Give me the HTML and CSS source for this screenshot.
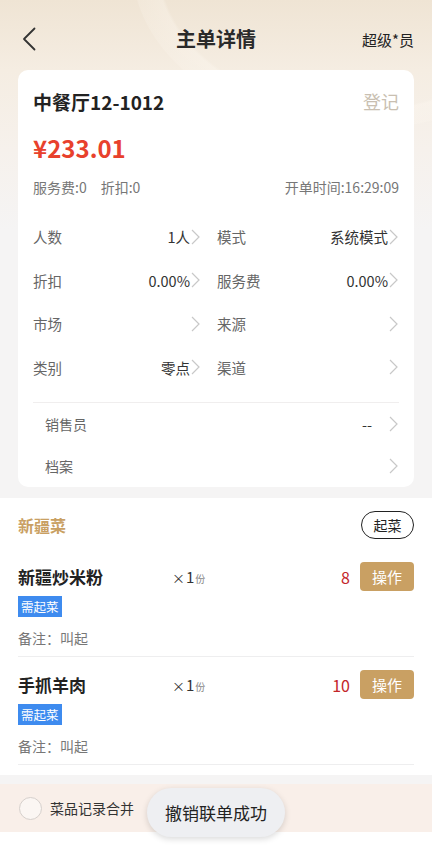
FILE: index.html
```html
<!DOCTYPE html>
<html lang="zh">
<head>
<meta charset="utf-8">
<link rel="stylesheet" href="styles.css">
</head>
<body>
<div class="page">
  <div class="top">
    <div class="deco"></div>
    <header class="header">
      <svg class="back" width="14" height="24" viewBox="0 0 14 24"><polyline points="12.5,1.5 2,12 12.5,22.5" fill="none" stroke="#333" stroke-width="1.8" stroke-linecap="round" stroke-linejoin="round"/></svg>
      <h1 class="title">主单详情</h1>
      <span class="user">超级*员</span>
    </header>
    <section class="card">
      <div class="card-head">
        <span class="table-name">中餐厅12-1012</span>
        <span class="register">登记</span>
      </div>
      <div class="price">¥233.01</div>
      <div class="meta">
        <span>服务费:0<span class="sp"></span>折扣:0</span>
        <span>开单时间:16:29:09</span>
      </div>
      <div class="grid">
        <div class="cell"><span class="lab">人数</span><span class="val">1人</span><svg class="chev" viewBox="0 0 9 16"><polyline points="1,1 8,8 1,15"/></svg></div>
        <div class="cell"><span class="lab">模式</span><span class="val">系统模式</span><svg class="chev" viewBox="0 0 9 16"><polyline points="1,1 8,8 1,15"/></svg></div>
        <div class="cell"><span class="lab">折扣</span><span class="val">0.00%</span><svg class="chev" viewBox="0 0 9 16"><polyline points="1,1 8,8 1,15"/></svg></div>
        <div class="cell"><span class="lab">服务费</span><span class="val">0.00%</span><svg class="chev" viewBox="0 0 9 16"><polyline points="1,1 8,8 1,15"/></svg></div>
        <div class="cell"><span class="lab">市场</span><span class="val"></span><svg class="chev" viewBox="0 0 9 16"><polyline points="1,1 8,8 1,15"/></svg></div>
        <div class="cell"><span class="lab">来源</span><span class="val"></span><svg class="chev" viewBox="0 0 9 16"><polyline points="1,1 8,8 1,15"/></svg></div>
        <div class="cell"><span class="lab">类别</span><span class="val">零点</span><svg class="chev" viewBox="0 0 9 16"><polyline points="1,1 8,8 1,15"/></svg></div>
        <div class="cell"><span class="lab">渠道</span><span class="val"></span><svg class="chev" viewBox="0 0 9 16"><polyline points="1,1 8,8 1,15"/></svg></div>
      </div>
      <div class="rows">
        <div class="row"><span class="lab">销售员</span><span class="val dash">--</span><svg class="chev" viewBox="0 0 9 16"><polyline points="1,1 8,8 1,15"/></svg></div>
        <div class="row"><span class="lab">档案</span><span class="val"></span><svg class="chev" viewBox="0 0 9 16"><polyline points="1,1 8,8 1,15"/></svg></div>
      </div>
    </section>
  </div>

  <section class="dishes">
    <div class="dish-head">
      <span class="cat">新疆菜</span>
      <span class="pill">起菜</span>
    </div>
    <div class="dish">
      <div class="dish-line">
        <span class="dname">新疆炒米粉</span>
        <span class="qty"><span class="x">×</span>1<small>份</small></span>
        <span class="num">8</span>
        <span class="op">操作</span>
      </div>
      <span class="tag">需起菜</span>
      <div class="note">备注：叫起</div>
    </div>
    <div class="dish">
      <div class="dish-line">
        <span class="dname">手抓羊肉</span>
        <span class="qty"><span class="x">×</span>1<small>份</small></span>
        <span class="num">10</span>
        <span class="op">操作</span>
      </div>
      <span class="tag">需起菜</span>
      <div class="note">备注：叫起</div>
    </div>
  </section>

  <div class="bottom">
    <span class="radio"></span>
    <span class="merge">菜品记录合并</span>
  </div>
  <div class="tail"></div>

  <div class="toast">撤销联单成功</div>
</div>
</body>
</html>
```

FILE: styles.css
```css
* { box-sizing: border-box; }
html, body { margin: 0; padding: 0; }
body {
  font-family: "Noto Sans CJK SC", "Noto Sans", sans-serif;
  background: #f5f4f4;
  color: #222;
}
.page {
  position: relative;
  width: 432px;
  height: 847px;
  overflow: hidden;
  background: #f5f4f4;
}
.top {
  position: relative;
  background: linear-gradient(180deg, #efe4d4 0px, #f5ede2 70px, #f6f1ec 150px, #f5f4f4 230px);
  padding-bottom: 11px;
}
.deco {
  position: absolute;
  right: -150px;
  top: -200px;
  width: 450px;
  height: 330px;
  border-radius: 50%;
  background: radial-gradient(ellipse at center, rgba(255,255,255,0) 62%, rgba(255,250,243,0.3) 63%, rgba(255,250,243,0.15) 72%, rgba(255,255,255,0) 73%);
  pointer-events: none;
}
.header {
  position: relative;
  height: 70px;
  padding: 8px 18px 0 22px;
  display: flex;
  align-items: center;
  justify-content: space-between;
}
.back { display: block; }
.title {
  position: absolute;
  left: 0;
  right: 0;
  top: 7px;
  bottom: 0;
  margin: 0;
  display: flex;
  align-items: center;
  justify-content: center;
  font-size: 20px;
  font-weight: 700;
  color: #2a2a2a;
  pointer-events: none;
}
.user {
  font-size: 15px;
  color: #222;
}
.card {
  position: relative;
  margin: 0 18px;
  background: #fff;
  border-radius: 10px;
  padding: 0 15px;
}
.card-head {
  height: 62px;
  display: flex;
  align-items: center;
  justify-content: space-between;
}
.table-name {
  font-size: 19px;
  font-weight: 700;
  color: #222;
}
.register {
  font-size: 18px;
  color: #c9bfb1;
}
.price {
  height: 32px;
  line-height: 32px;
  font-size: 24px;
  font-weight: 700;
  color: #e8412c;
}
.meta {
  margin-top: 10px;
  height: 26px;
  display: flex;
  align-items: center;
  justify-content: space-between;
  font-size: 14px;
  color: #777;
}
.sp { display: inline-block; width: 14px; }
.grid {
  margin-top: 15px;
  display: grid;
  grid-template-columns: 168px 1fr;
  column-gap: 16px;
}
.cell {
  height: 43.5px;
  display: flex;
  align-items: center;
}
.lab {
  font-size: 14.5px;
  color: #666;
}
.val {
  margin-left: auto;
  font-size: 14.5px;
  color: #333;
}
.chev {
  width: 9px;
  height: 16px;
  flex: none;
  margin: 0 1px 0 1px;
  fill: none;
  stroke: #c8c8c8;
  stroke-width: 1.2;
}
.rows {
  margin-top: 13px;
  border-top: 1px solid #f0eeee;
}
.row {
  height: 42px;
  display: flex;
  align-items: center;
  padding-left: 12px;
}
.row .lab { font-size: 14px; }
.dash { margin-right: 16px; color: #333; }
.dishes {
  background: #fff;
  padding: 0 18px 10px;
}
.dish-head {
  height: 52px;
  display: flex;
  align-items: center;
  justify-content: space-between;
  padding-top: 2px;
}
.cat {
  font-size: 16px;
  font-weight: 700;
  color: #c9a063;
}
.pill {
  height: 28px;
  width: 53px;
  border: 1.3px solid #222;
  border-radius: 14px;
  display: flex;
  align-items: center;
  justify-content: center;
  font-size: 14px;
  color: #222;
}
.dish {
  padding-top: 12px;
  border-bottom: 1.5px solid #eeeeef;
  padding-bottom: 8px;
}
.dish:last-child { padding-top: 13px; }
.dish-line {
  height: 29px;
  display: flex;
  align-items: center;
}
.dname {
  width: 154px;
  font-size: 17px;
  font-weight: 700;
  color: #222;
}
.qty {
  flex: 1;
  font-size: 15px;
  color: #333;
}
.qty .x { font-size: 13px; margin-right: 1px; }
.qty small { font-size: 10px; color: #888; margin-left: 1px; }
.num {
  font-size: 16px;
  color: #c3262a;
  margin-right: 10px;
}
.op {
  width: 54px;
  height: 29px;
  border-radius: 4px;
  background: #c9a063;
  color: #fff;
  font-size: 15px;
  display: flex;
  align-items: center;
  justify-content: center;
}
.tag {
  display: inline-block;
  margin-top: 5px;
  height: 21px;
  line-height: 21px;
  padding: 0 3px;
  background: #3e8bef;
  color: #fff;
  font-size: 12.5px;
}
.note {
  margin-top: 11px;
  height: 20px;
  line-height: 20px;
  font-size: 14px;
  color: #777;
}
.bottom {
  margin-top: 9px;
  height: 48px;
  background: #f9efe9;
  display: flex;
  align-items: center;
  padding-left: 19px;
}
.radio {
  width: 23px;
  height: 23px;
  border-radius: 50%;
  border: 1.3px solid #d6d0cc;
  background: #fbf6f3;
}
.merge {
  margin-left: 8px;
  font-size: 14px;
  color: #333;
}
.tail {
  height: 20px;
  background: #fff;
}
.toast {
  position: absolute;
  left: 147px;
  top: 788px;
  width: 138px;
  height: 49px;
  border-radius: 25px;
  background: #eeeff2;
  box-shadow: 0 2px 6px rgba(0,0,0,0.15);
  display: flex;
  align-items: center;
  justify-content: center;
  font-size: 17px;
  color: #222;
}
```
